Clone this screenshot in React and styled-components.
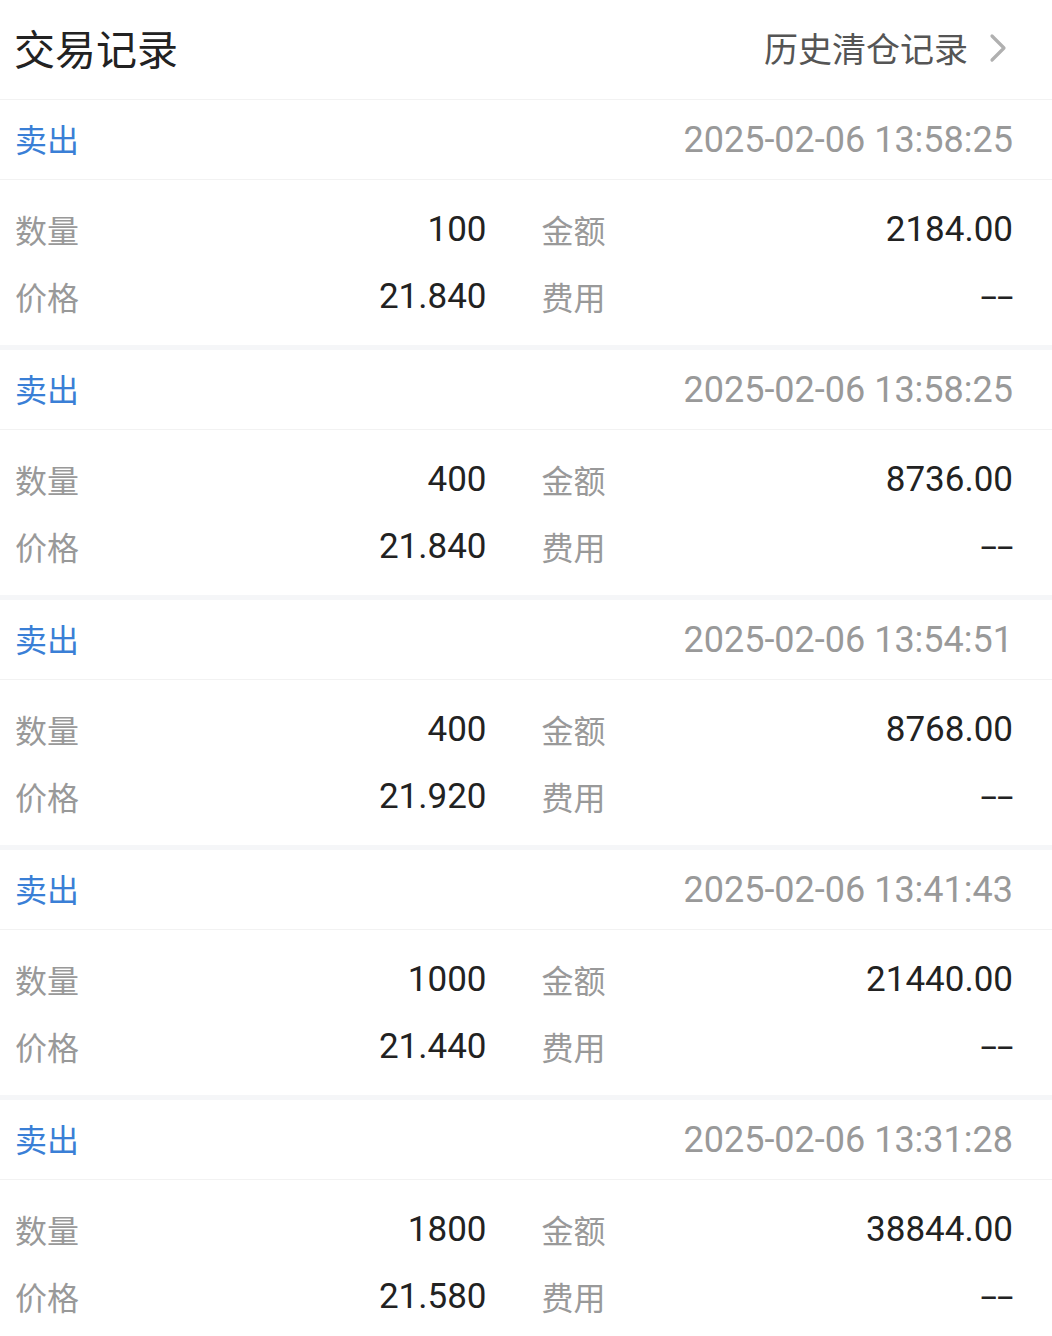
import React from 'react';
import styled, { createGlobalStyle } from 'styled-components';

const GlobalStyle = createGlobalStyle`
  html, body {
    margin: 0;
    padding: 0;
    background: #ffffff;
  }
  body {
    font-family: Roboto, "Noto Sans CJK SC", sans-serif;
    -webkit-font-smoothing: antialiased;
  }
`;

const Page = styled.div`
  width: 1052px;
  background: #ffffff;
`;

const Header = styled.div`
  height: 99px;
  display: flex;
  align-items: center;
  justify-content: space-between;
  padding: 0 44px 4px 14px;
  box-sizing: border-box;
  height: 100px;
  border-bottom: 1px solid #f2f2f2;
`;

const Title = styled.h1`
  margin: 0 0 2px;
  font-size: 41px;
  font-weight: 400;
  color: #222222;
`;

const HistoryLink = styled.a`
  display: flex;
  align-items: center;
  gap: 20px;
  font-size: 34px;
  color: #555555;
  text-decoration: none;
  cursor: pointer;
`;

const Card = styled.section`
  background: #ffffff;
  border-bottom: 5px solid #f5f6f8;
`;

const CardHead = styled.div`
  height: 79px;
  display: flex;
  align-items: center;
  justify-content: space-between;
  padding: 0 39px 0 15px;
  border-bottom: 1px solid #f2f2f2;
`;

const Side = styled.span`
  font-size: 32px;
  color: ${(props) => (props.$buy ? '#e4393c' : '#3a7fd6')};
  margin-bottom: 3px;
`;

const Time = styled.span`
  font-size: 36px;
  color: #999999;
`;

const Body = styled.div`
  display: grid;
  grid-template-columns: 1fr 1fr;
  column-gap: 55px;
  padding: 16px 39px 15px 15px;
`;

const Field = styled.div`
  height: 67px;
  display: flex;
  align-items: center;
  justify-content: space-between;
`;

const Label = styled.span`
  font-size: 32px;
  color: #999999;
  margin-bottom: 2px;
`;

const Value = styled.span`
  display: inline-block;
  font-size: 35px;
  color: #222222;
  transform: ${(props) => (props.$dash ? 'scaleX(1.7)' : 'none')};
  transform-origin: right center;
`;

const Chevron = () => (
  <svg width="20" height="30" viewBox="0 0 20 30" fill="none">
    <path d="M4 3 L16 15 L4 27" stroke="#b0b0b0" strokeWidth="3.2" strokeLinecap="round" strokeLinejoin="round" />
  </svg>
);

const trades = [
  { time: '2025-02-06 13:58:25', qty: '100', amount: '2184.00', price: '21.840', fee: '--' },
  { time: '2025-02-06 13:58:25', qty: '400', amount: '8736.00', price: '21.840', fee: '--' },
  { time: '2025-02-06 13:54:51', qty: '400', amount: '8768.00', price: '21.920', fee: '--' },
  { time: '2025-02-06 13:41:43', qty: '1000', amount: '21440.00', price: '21.440', fee: '--' },
  { time: '2025-02-06 13:31:28', qty: '1800', amount: '38844.00', price: '21.580', fee: '--' },
];

const App = () => {
  return (
    <Page>
      <GlobalStyle />
      <Header>
        <Title>交易记录</Title>
        <HistoryLink>
          历史清仓记录
          <Chevron />
        </HistoryLink>
      </Header>
      {trades.map((t, i) => (
        <Card key={i}>
          <CardHead>
            <Side>卖出</Side>
            <Time>{t.time}</Time>
          </CardHead>
          <Body>
            <Field>
              <Label>数量</Label>
              <Value>{t.qty}</Value>
            </Field>
            <Field>
              <Label>金额</Label>
              <Value>{t.amount}</Value>
            </Field>
            <Field>
              <Label>价格</Label>
              <Value>{t.price}</Value>
            </Field>
            <Field>
              <Label>费用</Label>
              <Value $dash={t.fee === '--'}>{t.fee}</Value>
            </Field>
          </Body>
        </Card>
      ))}
    </Page>
  );
};

export default App;
